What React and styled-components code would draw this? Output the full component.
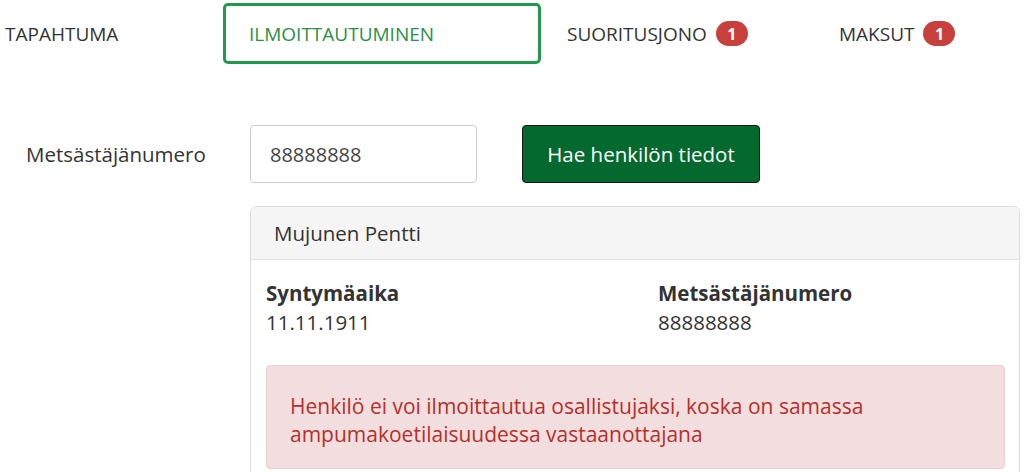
import React from 'react'
import styled, { createGlobalStyle } from 'styled-components'

const GlobalStyle = createGlobalStyle`
  body {
    margin: 0;
    background: #ffffff;
    font-family: 'Open Sans', 'Liberation Sans', sans-serif;
    color: #333333;
  }
`

const Page = styled.div`
  width: 1024px;
  height: 472px;
  overflow: hidden;
`

const Nav = styled.nav`
  display: flex;
  align-items: flex-start;
  padding-top: 3px;
`

const Tab = styled.div`
  box-sizing: border-box;
  width: ${p => p.$width}px;
  height: 61px;
  padding-left: ${p => p.$pad}px;
  display: flex;
  align-items: center;
  gap: 9px;
  font-size: 19px;
  color: ${p => (p.$active ? '#2a8f48' : '#333333')};
  border: 3px solid ${p => (p.$active ? '#1f9a4a' : 'transparent')};
  border-radius: 5px;
`

const Badge = styled.span`
  display: inline-flex;
  align-items: center;
  justify-content: center;
  min-width: 32px;
  height: 25px;
  border-radius: 13px;
  background: #c8403b;
  color: #ffffff;
  font-weight: 700;
  font-size: 16px;
`

const FormRow = styled.div`
  display: flex;
  align-items: center;
  margin-top: 61px;
`

const Label = styled.label`
  box-sizing: border-box;
  width: 250px;
  padding-left: 26px;
  font-size: 20.5px;
`

const Input = styled.input`
  box-sizing: border-box;
  width: 227px;
  height: 58px;
  padding: 0 19px;
  border: 1px solid #cccccc;
  border-radius: 4px;
  font-family: inherit;
  font-size: 20px;
  color: #444444;
  outline: none;
`

const Button = styled.button`
  box-sizing: border-box;
  margin-left: 45px;
  width: 238px;
  height: 58px;
  border: 1px solid #161616;
  border-radius: 4px;
  background: #04692e;
  color: #ffffff;
  font-family: inherit;
  font-size: 20.5px;
`

const Panel = styled.div`
  box-sizing: border-box;
  margin: 23px 0 0 250px;
  width: 770px;
  border: 1px solid #dddddd;
  border-radius: 6px;
`

const PanelHeader = styled.div`
  box-sizing: border-box;
  height: 53px;
  padding-left: 23px;
  display: flex;
  align-items: center;
  background: #f5f5f5;
  border-bottom: 1px solid #dddddd;
  border-radius: 6px 6px 0 0;
  font-size: 20.5px;
`

const PanelBody = styled.div`
  padding: 19px 14px 20px 15px;
`

const InfoGrid = styled.div`
  display: grid;
  grid-template-columns: 392px 1fr;
  font-size: 20.5px;
  line-height: 29px;
`

const InfoLabel = styled.div`
  font-weight: 700;
`

const Alert = styled.div`
  margin-top: 28px;
  padding: 26px 23px 20px;
  background: #f2dede;
  border: 1px solid #ebccd1;
  border-radius: 4px;
  color: #b62f2b;
  font-size: 21px;
  line-height: 28px;
`

const App = () => {
  return (
    <Page>
      <GlobalStyle />
      <Nav>
        <Tab $width={223} $pad={2}>TAPAHTUMA</Tab>
        <Tab $width={318} $pad={23} $active>ILMOITTAUTUMINEN</Tab>
        <Tab $width={272} $pad={23}>SUORITUSJONO <Badge>1</Badge></Tab>
        <Tab $width={200} $pad={23}>MAKSUT <Badge>1</Badge></Tab>
      </Nav>
      <FormRow>
        <Label>Metsästäjänumero</Label>
        <Input defaultValue="88888888" />
        <Button>Hae henkilön tiedot</Button>
      </FormRow>
      <Panel>
        <PanelHeader>Mujunen Pentti</PanelHeader>
        <PanelBody>
          <InfoGrid>
            <div>
              <InfoLabel>Syntymäaika</InfoLabel>
              <div>11.11.1911</div>
            </div>
            <div>
              <InfoLabel>Metsästäjänumero</InfoLabel>
              <div>88888888</div>
            </div>
          </InfoGrid>
          <Alert>
            Henkilö ei voi ilmoittautua osallistujaksi, koska on samassa
            ampumakoetilaisuudessa vastaanottajana
          </Alert>
        </PanelBody>
      </Panel>
    </Page>
  )
}

export default App
